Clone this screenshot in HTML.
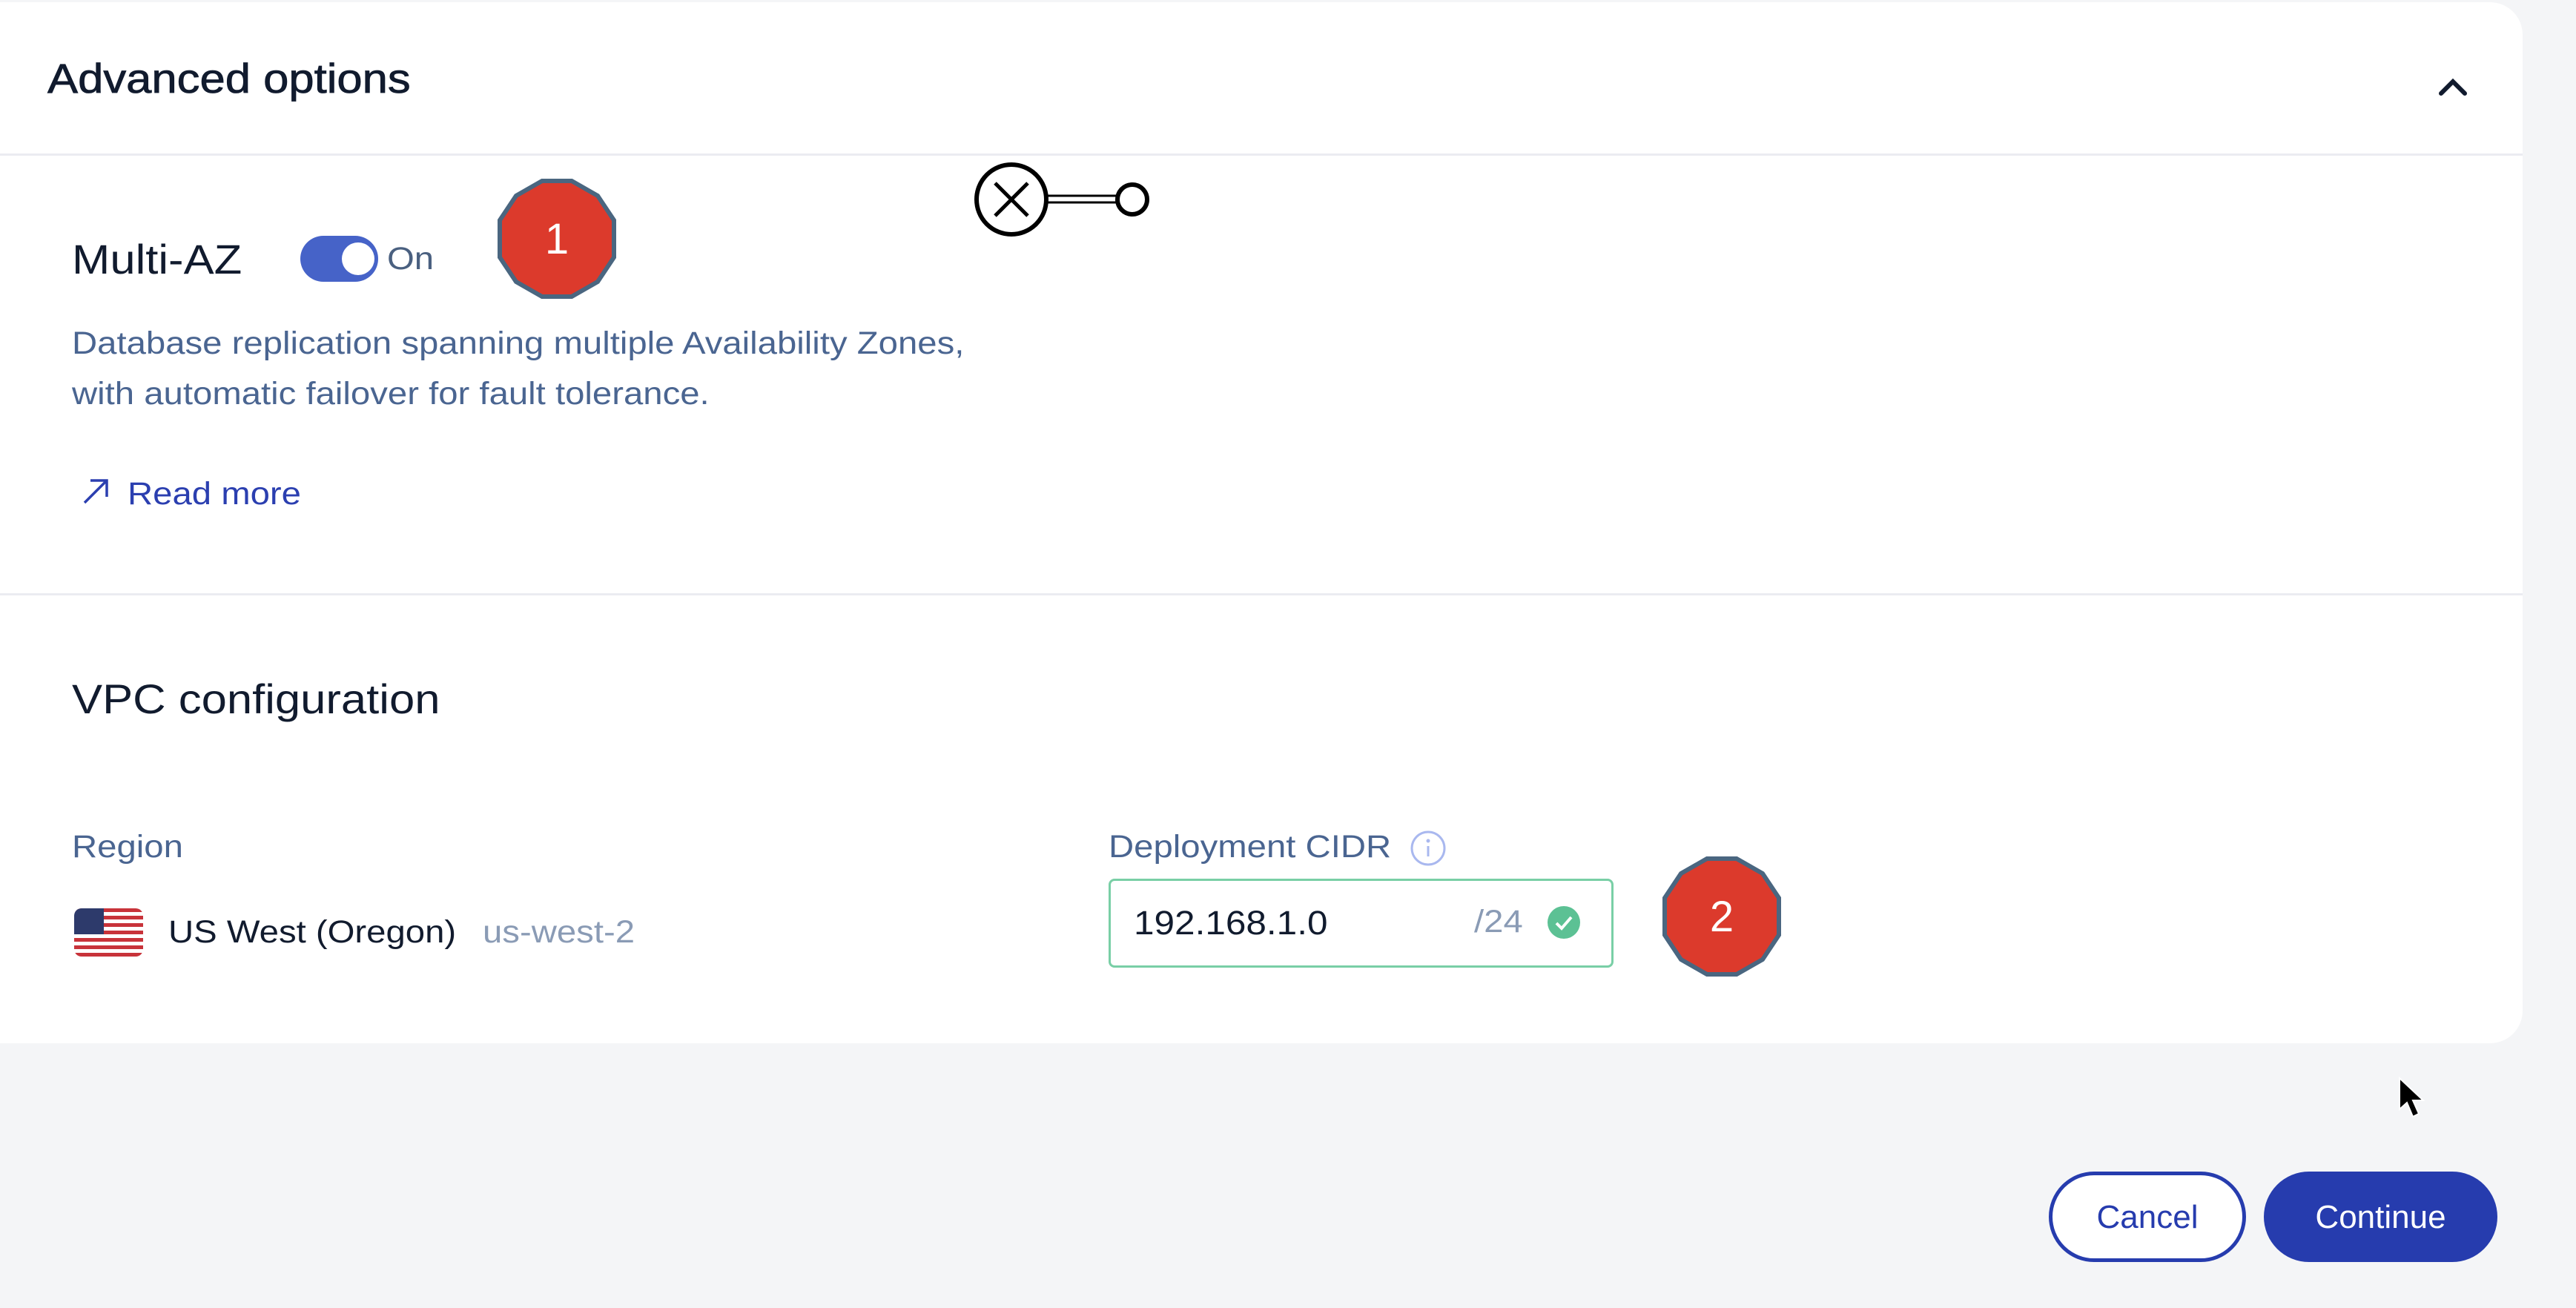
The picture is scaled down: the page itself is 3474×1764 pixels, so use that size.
<!DOCTYPE html>
<html><head><meta charset="utf-8"><style>
*{margin:0;padding:0;box-sizing:border-box}
body{width:3474px;height:1764px;background:#f4f5f7;font-family:"Liberation Sans",sans-serif;position:relative;overflow:hidden}
.card{position:absolute;left:0;top:3px;width:3402px;height:1404px;background:#fff;border-radius:0 44px 44px 0}
.t{position:absolute;white-space:nowrap;line-height:1}
.w{transform:scaleX(1.1);transform-origin:0 50%}
.hr{position:absolute;left:0;width:3402px;height:3px;background:#ebecf1}
</style></head><body>
<div class="card"></div>
<div class="t w" style="left:64px;top:78px;font-size:56px;color:#111b2e;-webkit-text-stroke:0.8px #111b2e">Advanced options</div>
<svg style="position:absolute;left:3286px;top:100px" width="44" height="34"><path d="M6 26 L22 10 L38 26" fill="none" stroke="#111b2e" stroke-width="6" stroke-linecap="round"/></svg>
<div class="hr" style="top:207px"></div>

<div class="t w" style="left:97px;top:322px;font-size:56px;color:#111b2e">Multi-AZ</div>
<div style="position:absolute;left:405px;top:318px;width:105px;height:62px;border-radius:31px;background:#4663c8"></div>
<div style="position:absolute;left:461px;top:327px;width:44px;height:44px;border-radius:50%;background:#fff"></div>
<div class="t w" style="left:522px;top:328px;font-size:43px;color:#4a6080">On</div>

<svg style="position:absolute;left:665px;top:236px" width="172" height="172" viewBox="-86 -86 172 172">
<polygon points="-20,-78 20,-78 55,-58 77,-25 77,25 55,58 20,78 -20,78 -55,58 -77,25 -77,-25 -55,-58" fill="#dc3a2c" stroke="#4a6680" stroke-width="6"/>
<text x="0" y="20" text-anchor="middle" font-family="Liberation Sans" font-size="58" fill="#fff">1</text></svg>

<svg style="position:absolute;left:1300px;top:200px" width="300" height="140">
<circle cx="64" cy="69" r="47" fill="none" stroke="#000" stroke-width="6"/>
<path d="M42 47 L86 91 M86 47 L42 91" stroke="#000" stroke-width="5"/>
<path d="M113 64 H207 M113 73 H207" stroke="#000" stroke-width="3"/>
<circle cx="227" cy="69" r="20" fill="#fff" stroke="#000" stroke-width="6"/></svg>

<div class="t w" style="left:97px;top:442px;font-size:43px;color:#4a6591">Database replication spanning multiple Availability Zones,</div>
<div class="t w" style="left:97px;top:510px;font-size:43px;color:#4a6591">with automatic failover for fault tolerance.</div>
<svg style="position:absolute;left:108px;top:640px" width="44" height="44"><path d="M6 38 L36 8 M14 8 H36 V30" fill="none" stroke="#2b3fb0" stroke-width="3.5"/></svg>
<div class="t w" style="left:172px;top:645px;font-size:43px;color:#2b3fb0">Read more</div>
<div class="hr" style="top:800px"></div>

<div class="t w" style="left:97px;top:915px;font-size:56px;color:#111b2e">VPC configuration</div>
<div class="t w" style="left:97px;top:1121px;font-size:43px;color:#4a6591">Region</div>
<svg style="position:absolute;left:100px;top:1225px" width="93" height="65" viewBox="0 0 93 65">
<defs><clipPath id="c"><rect width="93" height="65" rx="10"/></clipPath></defs>
<g clip-path="url(#c)"><rect width="93" height="65" fill="#fff"/>
<g fill="#c8333a"><rect y="0" width="93" height="5"/><rect y="10" width="93" height="5"/><rect y="20" width="93" height="5"/><rect y="30" width="93" height="5"/><rect y="40" width="93" height="5"/><rect y="50" width="93" height="5"/><rect y="60" width="93" height="5"/></g>
<rect width="40" height="35" fill="#2d3a6b"/></g></svg>
<div class="t w" style="left:227px;top:1236px;font-size:43px;color:#111b2e">US West (Oregon)</div>
<div class="t w" style="left:651px;top:1236px;font-size:43px;color:#8a9bb5">us-west-2</div>

<div class="t w" style="left:1495px;top:1121px;font-size:43px;color:#4a6591">Deployment CIDR</div>
<svg style="position:absolute;left:1900px;top:1118px" width="52" height="52"><circle cx="26" cy="26" r="22" fill="none" stroke="#a9b8ef" stroke-width="3"/><circle cx="26" cy="16" r="2.5" fill="#a9b8ef"/><path d="M26 23 V37" stroke="#a9b8ef" stroke-width="3"/></svg>
<div style="position:absolute;left:1495px;top:1185px;width:681px;height:120px;border:3px solid #79cfa6;border-radius:8px"></div>
<div class="t w" style="left:1529px;top:1222px;font-size:45px;color:#111b2e">192.168.1.0</div>
<div class="t w" style="left:1988px;top:1222px;font-size:43px;color:#8a9bb5">/24</div>
<svg style="position:absolute;left:2086px;top:1221px" width="46" height="46"><circle cx="23" cy="23" r="22" fill="#5cc194"/><path d="M13 24 L20 31 L33 16" fill="none" stroke="#fff" stroke-width="4"/></svg>

<svg style="position:absolute;left:2236px;top:1150px" width="172" height="172" viewBox="-86 -86 172 172">
<polygon points="-20,-78 20,-78 55,-58 77,-25 77,25 55,58 20,78 -20,78 -55,58 -77,25 -77,-25 -55,-58" fill="#dc3a2c" stroke="#4a6680" stroke-width="6"/>
<text x="0" y="20" text-anchor="middle" font-family="Liberation Sans" font-size="58" fill="#fff">2</text></svg>

<svg style="position:absolute;left:3232px;top:1452px" width="40" height="60"><path d="M4 2 L4 44 L14 35 L22 54 L30 50 L22 32 L36 32 Z" fill="#000" stroke="#fff" stroke-width="2"/></svg>

<div style="position:absolute;left:2763px;top:1580px;width:266px;height:122px;border:5px solid #263cae;border-radius:61px;background:#fff"></div>
<div class="t" style="left:2763px;top:1620px;width:266px;text-align:center;font-size:44px;color:#263cae">Cancel</div>
<div style="position:absolute;left:3053px;top:1580px;width:315px;height:122px;border-radius:61px;background:#263cae"></div>
<div class="t" style="left:3053px;top:1620px;width:315px;text-align:center;font-size:44px;color:#fff">Continue</div>
</body></html>
